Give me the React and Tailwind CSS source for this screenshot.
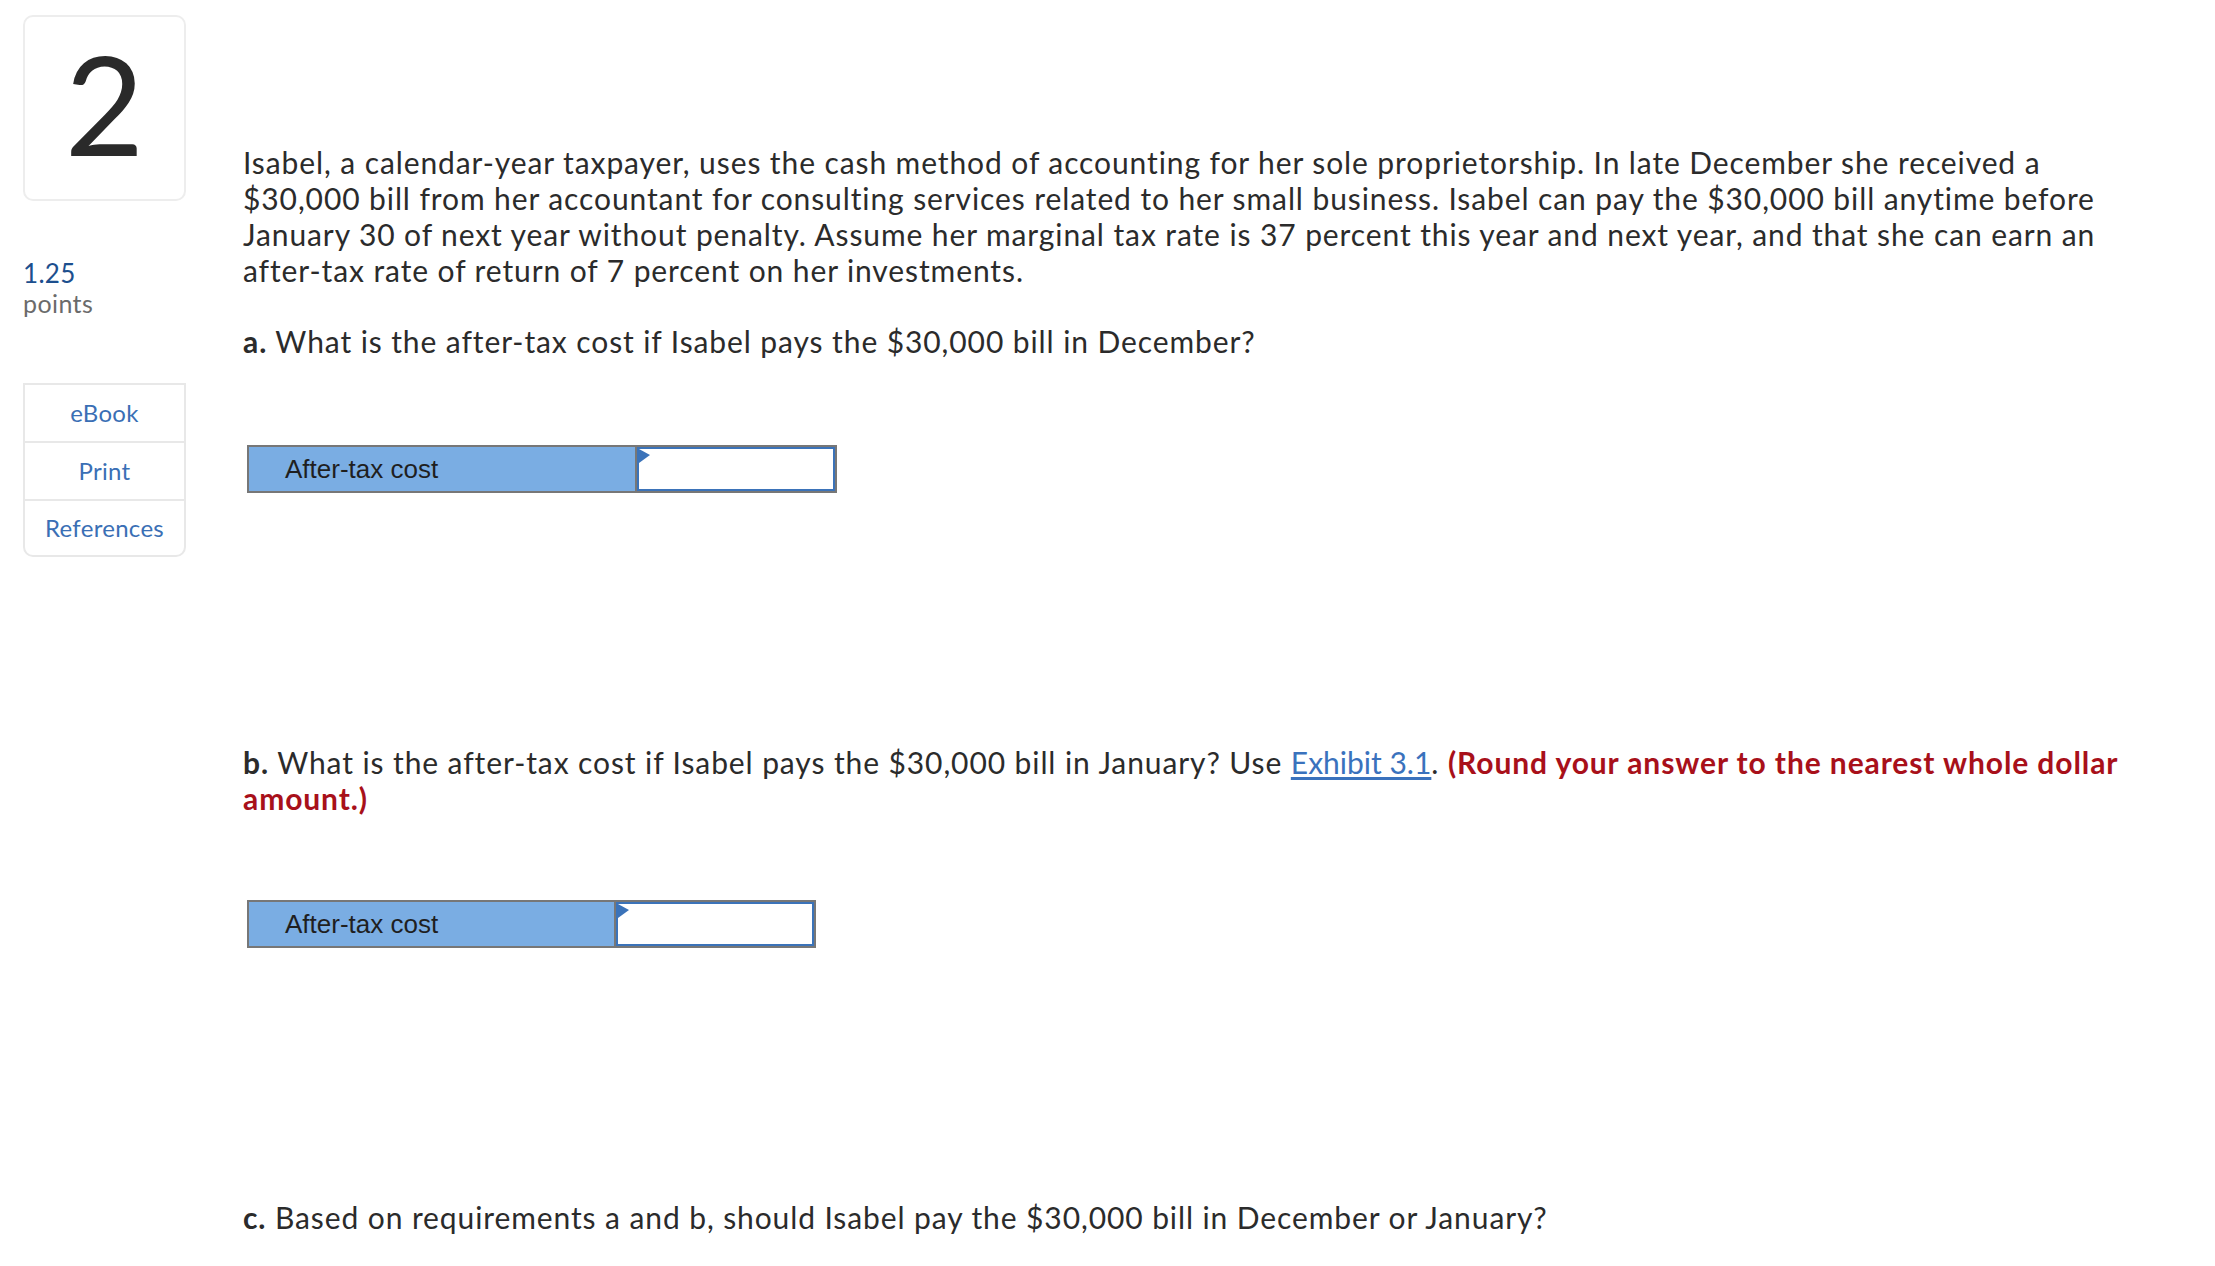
import React from 'react';

const body = { fontFamily: 'Lato, "Open Sans", sans-serif' };
const cellFont = { fontFamily: '"Liberation Sans", Arial, sans-serif' };

function AnswerRow({ labelWidth }) {
  return (
    <div className="flex h-[48px] w-fit border-2 border-[#777777] ml-[4px] tracking-normal">
      <div
        className={`flex items-center border-r-2 border-[#777777] bg-[#7aade3] pl-[36px] text-[26px] text-[#1f1f1f] ${labelWidth}`}
        style={cellFont}
      >
        After-tax cost
      </div>
      <div className="relative w-[198px] border-2 border-[#3b73b9] bg-white">
        <svg className="absolute left-0 top-0" width="11" height="14" viewBox="0 0 11 14">
          <polygon points="0,0 11,6 0,14" fill="#3b73b9" />
        </svg>
      </div>
    </div>
  );
}

export default function App() {
  return (
    <div className="flex min-h-[1266px] w-full bg-white text-[#2b2b2b]" style={body}>
      {/* left rail */}
      <div className="ml-[23px] mt-[15px] w-[163px] shrink-0">
        <div className="flex h-[186px] items-center justify-center rounded-[10px] border-2 border-[#ededed] pb-[10px]">
          <span className="text-[137px] leading-none text-[#2a2a2a]">2</span>
        </div>
        <div className="mt-[57px] text-[26px] leading-[30px] tracking-[0.3px] text-[#1c4f8e]">1.25</div>
        <div className="text-[25px] leading-[30px] tracking-[0.4px] text-[#6b6b6b]">points</div>
        <div className="mt-[65px] rounded-b-[10px] border-2 border-[#e8e8e8] text-[24px] tracking-[0.3px] text-[#3a6fb5]">
          <div className="flex h-[56px] items-center justify-center">eBook</div>
          <div className="flex h-[58px] items-center justify-center border-t-2 border-[#e8e8e8]">Print</div>
          <div className="flex h-[56px] items-center justify-center border-t-2 border-[#e8e8e8]">References</div>
        </div>
      </div>

      {/* question */}
      <div className="ml-[57px] pt-[144px] text-[30px] leading-[36px] tracking-[0.9px] whitespace-nowrap">
        <p>
          Isabel, a calendar-year taxpayer, uses the cash method of accounting for her sole proprietorship. In late December she received a
          <br />
          $30,000 bill from her accountant for consulting services related to her small business. Isabel can pay the $30,000 bill anytime before
          <br />
          January 30 of next year without penalty. Assume her marginal tax rate is 37 percent this year and next year, and that she can earn an
          <br />
          after-tax rate of return of 7 percent on her investments.
        </p>

        <p className="mt-[35px]">
          <b className="font-bold">a.</b> What is the after-tax cost if Isabel pays the $30,000 bill in December?
        </p>

        <div className="mt-[86px]">
          <AnswerRow labelWidth="w-[388px]" />
        </div>

        <p className="mt-[251px]">
          <b className="font-bold">b.</b> What is the after-tax cost if Isabel pays the $30,000 bill in January? Use{' '}
          <a href="#" className="tracking-normal text-[#3a72bd] underline underline-offset-[3px]">Exhibit 3.1</a>.{' '}
          <span className="font-bold text-[#a8101a]">(Round your answer to the nearest whole dollar</span>
          <br />
          <span className="font-bold text-[#a8101a]">amount.)</span>
        </p>

        <div className="mt-[84px]">
          <AnswerRow labelWidth="w-[367px]" />
        </div>

        <p className="mt-[251px]">
          <b className="font-bold">c.</b> Based on requirements a and b, should Isabel pay the $30,000 bill in December or January?
        </p>
      </div>
    </div>
  );
}
